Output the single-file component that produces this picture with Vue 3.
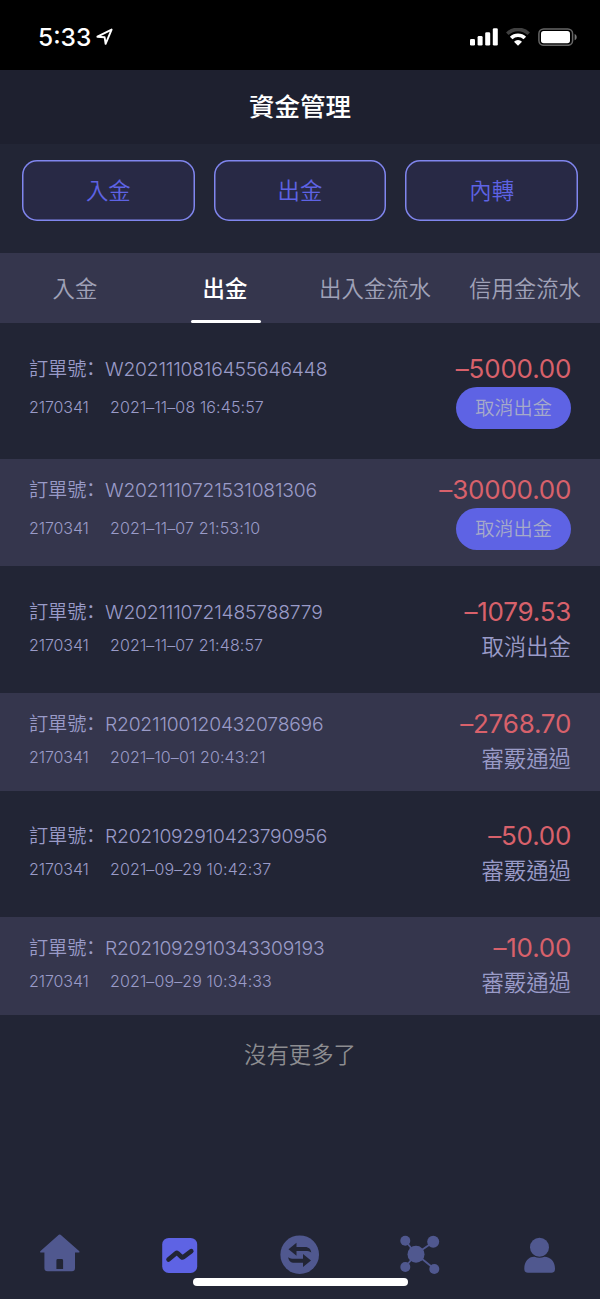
<script setup>
const actions = ['入金', '出金', '內轉']
const tabs = ['入金', '出金', '出入金流水', '信用金流水']
const orders = [
  { no: 'W2021110816455646448', time: '2021–11–08 16:45:57', amount: '–5000.00', pending: true },
  { no: 'W2021110721531081306', time: '2021–11–07 21:53:10', amount: '–30000.00', pending: true },
  { no: 'W2021110721485788779', time: '2021–11–07 21:48:57', amount: '–1079.53', status: '取消出金' },
  { no: 'R2021100120432078696', time: '2021–10–01 20:43:21', amount: '–2768.70', status: '審覈通過' },
  { no: 'R2021092910423790956', time: '2021–09–29 10:42:37', amount: '–50.00', status: '審覈通過' },
  { no: 'R2021092910343309193', time: '2021–09–29 10:34:33', amount: '–10.00', status: '審覈通過' },
]
</script>

<template>
  <div class="screen">
    <header class="status">
      <div class="clock">
        <span>5:33</span>
        <svg width="18" height="18" viewBox="0 0 18 18"><path d="M1.4 8.7 15.6 1.6 9.6 15.8 8.6 9.2Z" fill="none" stroke="#fff" stroke-width="1.9" stroke-linejoin="round" /></svg>
      </div>
      <div class="indicators">
        <svg width="28" height="18" viewBox="0 0 28 18" fill="#fff">
          <rect x="0" y="11" width="5" height="6.5" rx="1.3" /><rect x="7.6" y="8" width="5" height="9.5" rx="1.3" />
          <rect x="15.2" y="4.3" width="5" height="13.2" rx="1.3" /><rect x="22.8" y="0.3" width="5" height="17.2" rx="1.3" />
        </svg>
        <svg class="wifi" width="24" height="18" viewBox="0 0 24 18">
          <path d="M1.3 5.7a15.4 15.4 0 0 1 21.4 0" fill="none" stroke="#404040" stroke-width="3.6" />
          <path d="M5.2 10a9.8 9.8 0 0 1 13.6 0" fill="none" stroke="#fff" stroke-width="3.7" />
          <path d="M12 17.7 8 13.7a5.8 5.8 0 0 1 8 0Z" fill="#fff" />
        </svg>
        <svg class="battery" width="40" height="18" viewBox="0 0 40 18">
          <rect x="0.9" y="0.9" width="33.7" height="16.4" rx="4.8" fill="none" stroke="#666" stroke-width="1.5" />
          <rect x="3" y="3" width="29" height="12.2" rx="2.7" fill="#fff" />
          <path d="M36.6 6v6.3c2.8-1 2.8-5.3 0-6.3Z" fill="#777" />
        </svg>
      </div>
    </header>

    <h1 class="title">資金管理</h1>

    <div class="actions">
      <button v-for="a in actions" :key="a" class="action">{{ a }}</button>
    </div>

    <nav class="tabs">
      <div v-for="(t, i) in tabs" :key="t" class="tab" :class="{ active: i === 1 }"><span>{{ t }}</span></div>
    </nav>

    <main>
      <section v-for="o in orders" :key="o.no" class="order" :class="{ pending: o.pending }">
        <div class="info">
          <div class="number"><span class="label">訂單號<span class="colon">：</span></span><span>{{ o.no }}</span></div>
          <div class="meta"><span class="account">2170341</span><span>{{ o.time }}</span></div>
        </div>
        <div class="result">
          <div class="amount">{{ o.amount }}</div>
          <button v-if="o.pending" class="cancel">取消出金</button>
          <div v-else class="state">{{ o.status }}</div>
        </div>
      </section>
      <p class="end">沒有更多了</p>
    </main>

    <footer class="bottom">
      <div class="item">
        <svg width="40" height="40" viewBox="0 0 40 40" fill="#50588f">
          <path fill-rule="evenodd" d="M18.8.8q.9-.8 1.8 0l18.2 16c1.2 1.1.8 1.8-.6 1.8H35V34q0 3.2-3.2 3.2H7.6Q4.4 37.2 4.4 34V18.600H1.4C0 18.600-.4 17.900.8 16.800ZM17.800 25q-1.400 0-1.400 1.400v8.600h6.700V26.400q0-1.400-1.400-1.400Z" />
        </svg>
      </div>
      <div class="item">
        <svg width="40" height="40" viewBox="0 0 40 40">
          <rect x="2.2" y="3.9" width="35" height="35" rx="6.5" fill="#5e63e4" />
          <path d="m8.500 25.500 7.500-6.300q.8-.7 1.600.1l4.200 3.900q.7.600 1.500 0l8-6" fill="none" stroke="#222535" stroke-width="4.6" stroke-linecap="round" stroke-linejoin="round" />
        </svg>
      </div>
      <div class="item">
        <svg width="40" height="40" viewBox="0 0 40 40">
          <circle cx="19.7" cy="20.7" r="19.3" fill="#50588f" />
          <path d="m8.500 15.200 8-6.500v4.200h8.500c4 0 5.800 2.200 6.300 5.600-1.700-1.200-3.300-1.500-5.800-1.500h-9v4.800ZM31 26.600l-8 6.500v-4.300h-8.500c-4 0-5.900-2.200-6.300-5.600 1.700 1.200 3.300 1.500 5.800 1.500h9v-4.800Z" fill="#222535" />
        </svg>
      </div>
      <div class="item">
        <svg width="40" height="40" viewBox="0 0 40 40" fill="#50588f">
          <path d="M5.300 6.700 16 20 33.300 8M5.300 33 16 20 34.500 35" fill="none" stroke="#50588f" stroke-width="1.8" />
          <circle cx="5.3" cy="6.7" r="5" /><circle cx="33.2" cy="7.7" r="6" /><circle cx="16" cy="20.3" r="8.5" />
          <circle cx="5.3" cy="33" r="5" /><circle cx="34.3" cy="35" r="5" />
        </svg>
      </div>
      <div class="item">
        <svg width="40" height="40" viewBox="0 0 40 40" fill="#50588f">
          <circle cx="19.5" cy="13.2" r="9.5" /><path d="M4.300 35v-.5c0-7 4.500-12 10.200-11.700q5 1.700 10 0c6 0 10.500 5 10.500 11.700v.5q0 3.700-3.500 3.700H8Q4.300 38.700 4.300 35Z" />
        </svg>
      </div>
      <div class="home-bar"></div>
    </footer>
  </div>
</template>

<style>
html, body { background: #222535; }
</style>

<style scoped>
* { box-sizing: border-box; }
.screen { display: flex; flex-direction: column; width: 600px; height: 1299px; overflow: hidden; background: #222535; font-family: Inter, "Noto Sans CJK TC", sans-serif; color: #9a9bc8; }
button { font: inherit; padding: 0; margin: 0; }
.status { flex: none; display: flex; justify-content: space-between; height: 70px; background: #000; padding: 0 22px 0 38px; }
.clock { display: flex; gap: 5px; color: #fff; font-size: 24.5px; font-weight: 500; line-height: 30px; padding-top: 22px; }
.clock svg { margin-top: 6px; }
.indicators { display: flex; padding-top: 28px; }
.wifi { margin-left: 8px; }
.battery { margin-left: 8px; }
.title { flex: none; margin: 0; height: 74px; background: #1e202f; color: #fff; font-family: "Noto Sans CJK TC Medium", "Noto Sans CJK TC", sans-serif; font-size: 25.5px; font-weight: 400; line-height: 70px; text-align: center; }
.actions { flex: none; display: flex; gap: 19px; height: 109px; padding: 16px 22px 32px; }
.action { flex: 1; height: 61px; border: 0; box-shadow: inset 0 0 0 1.5px #8086ee; border-radius: 15px; background: #282945; color: #5e63e4; font-size: 22.4px; font-weight: 350; line-height: 59px; }
.tabs { flex: none; display: flex; height: 70px; background: #35364d; color: #a0a2b8; font-size: 22.4px; font-weight: 350; line-height: 71px; }
.tab { width: 150px; display: flex; flex-direction: column; align-items: center; white-space: nowrap; }
.tab span { height: 67px; }
.active { color: #fff; font-weight: 500; }
.active::after { content: ""; width: 70px; height: 3px; border-radius: 2px; background: #fff; margin-left: 1px; }
.order { display: flex; justify-content: space-between; height: 98px; padding: 16.5px 29px 0; }
.order.pending { height: 107px; padding-top: 16px; }
.order:nth-child(odd) { height: 126px; padding-top: 30.5px; }
.order:nth-child(3) { height: 126.5px; padding-top: 31px; }
.order.pending:nth-child(odd) { height: 136px; padding-top: 31px; }
.order:nth-child(even) { background: #35364d; }
.number { display: flex; height: 30px; line-height: 30px; font-size: 19.3px; font-weight: 350; letter-spacing: -0.2px; }
.label { display: flex; width: 76px; font-family: "Noto Sans CJK TC", sans-serif; font-size: 19.2px; line-height: 29px; letter-spacing: -0.1px; white-space: nowrap; }
.colon { width: 19px; margin-left: -5px; }
.meta { display: flex; line-height: 24px; margin-top: 6px; font-size: 16px; font-weight: 350; letter-spacing: 0.12px; }
.pending .meta { margin-top: 11px; }
.account { width: 81px; letter-spacing: -0.1px; }
.result { display: flex; flex-direction: column; align-items: flex-end; }
.amount { color: #d8616b; font-size: 26px; line-height: 30px; height: 30px; letter-spacing: -0.2px; margin-right: -0.2px; }
.state { font-size: 22.4px; font-weight: 350; line-height: 39px; }
.cancel { width: 115px; height: 42px; margin-top: 3px; border: 0; border-radius: 21px; background: #5e63e4; color: #a6aac9; font-size: 19.2px; font-weight: 350; line-height: 40px; }
.end { margin: 0; color: #8d8d91; font-size: 22.4px; font-weight: 350; line-height: 79px; text-align: center; }
.bottom { position: relative; flex: none; display: flex; height: 65px; margin-top: auto; }
.item { flex: 1; display: flex; justify-content: center; }
.home-bar { position: absolute; left: 193px; top: 44px; width: 215px; height: 8px; border-radius: 4px; background: #fff; }
</style>
